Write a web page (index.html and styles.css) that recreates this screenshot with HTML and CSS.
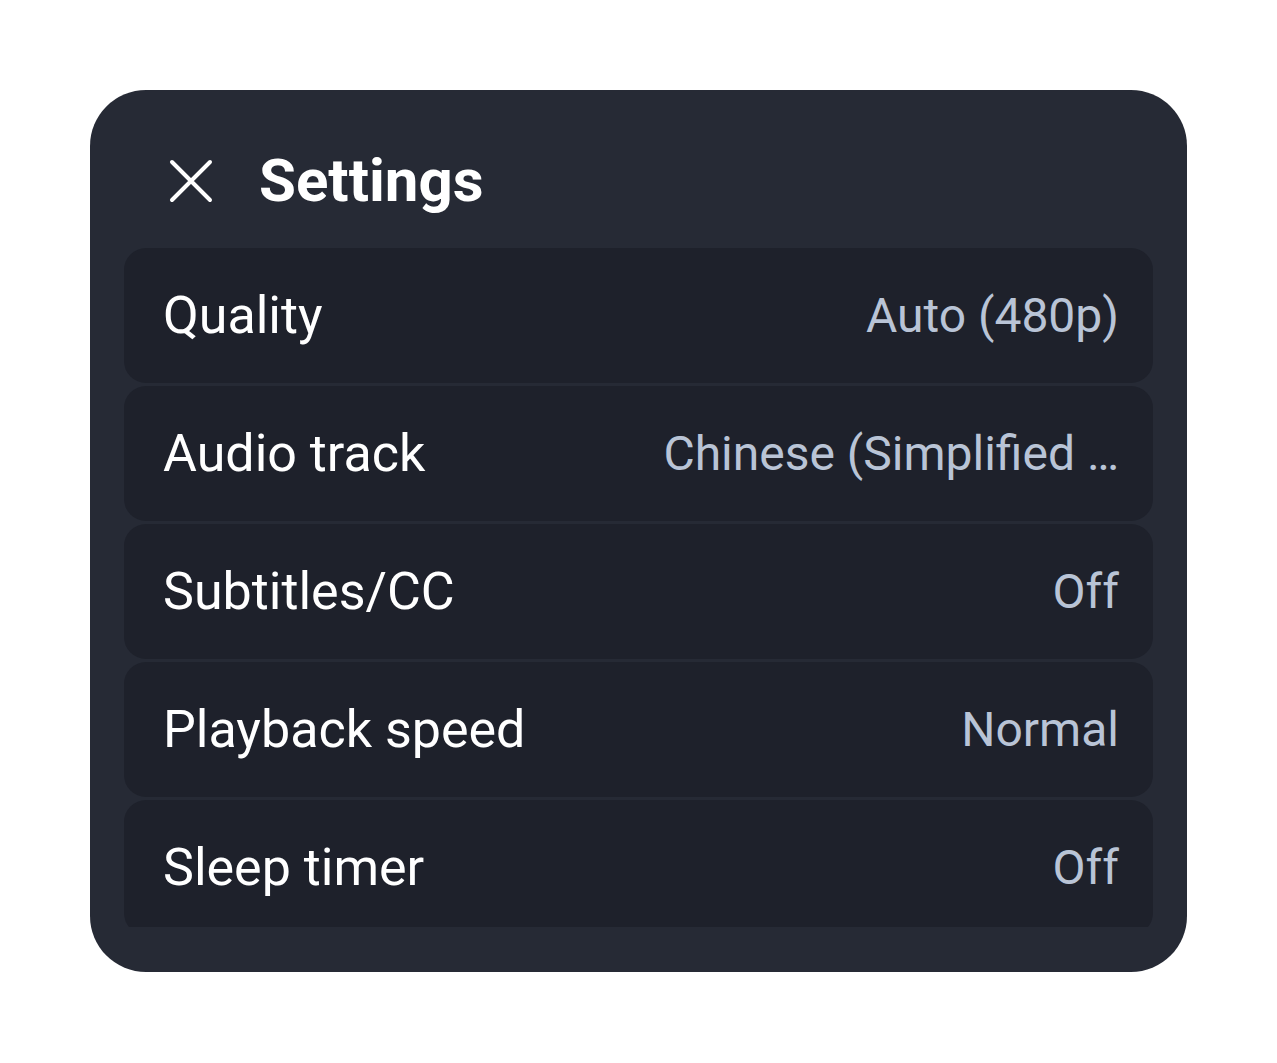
FILE: index.html
```html
<!DOCTYPE html>
<html lang="en">
<head>
    <meta charset="UTF-8">
    <meta name="viewport" content="width=device-width, initial-scale=1.0">
    <title>Settings</title>
    <link rel="stylesheet" href="styles.css">
</head>
<body>
    <div class="panel">
        <div class="header">
            <button class="close" aria-label="Close">
                <svg width="44" height="44" viewBox="0 0 44 44">
                    <path d="M3 3 L41 41 M41 3 L3 41" stroke="#fff" stroke-width="4" stroke-linecap="round" fill="none"/>
                </svg>
            </button>
            <h1>Settings</h1>
        </div>

        <div class="list">
            <div class="row">
                <span class="label">Quality</span>
                <span class="value">Auto (480p)</span>
            </div>
            <div class="row">
                <span class="label">Audio track</span>
                <span class="value">Chinese (Simplified …</span>
            </div>
            <div class="row">
                <span class="label">Subtitles/CC</span>
                <span class="value">Off</span>
            </div>
            <div class="row">
                <span class="label">Playback speed</span>
                <span class="value">Normal</span>
            </div>
            <div class="row">
                <span class="label">Sleep timer</span>
                <span class="value">Off</span>
            </div>
        </div>
    </div>
</body>
</html>
```

FILE: styles.css
```css
body {
    margin: 0;
    font-family: Roboto, "Liberation Sans", sans-serif;
    background-color: #fff;
}

.panel {
    margin: 90px 90px 0 90px;
    height: 882px;
    box-sizing: border-box;
    padding: 0 34px 45px 34px;
    background-color: #262a35;
    border-radius: 56px;
    display: flex;
    flex-direction: column;
}

.header {
    display: flex;
    align-items: center;
    padding: 56px 46px 32px 46px;
}

.close {
    width: 44px;
    height: 44px;
    padding: 0;
    margin: 0 46px 0 -1px;
    border: none;
    background: none;
    display: flex;
}

.header h1 {
    margin: 0;
    font-size: 60px;
    line-height: 70px;
    font-weight: 700;
    color: #fff;
}

.list {
    flex: 1;
    overflow: hidden;
    display: flex;
    flex-direction: column;
    gap: 3px;
}

.row {
    flex: 0 0 135px;
    display: flex;
    align-items: center;
    justify-content: space-between;
    padding: 0 34px 0 39px;
    background-color: #1e212b;
    border-radius: 22px;
}

.label {
    font-size: 52px;
    color: #fff;
}

.value {
    font-size: 48px;
    color: #b9c4d6;
}
```
